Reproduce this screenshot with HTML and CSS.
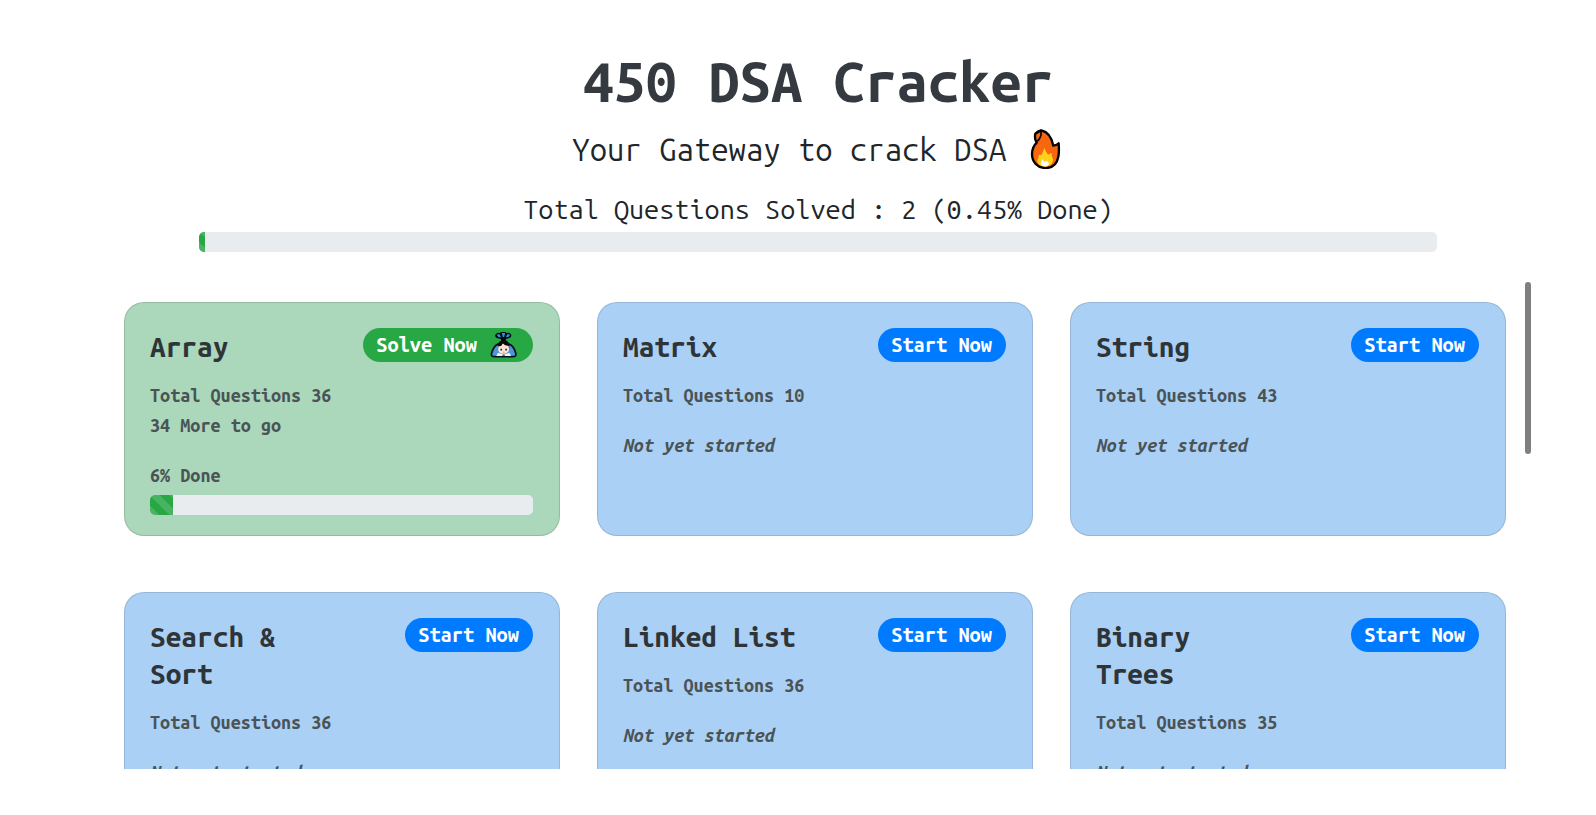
FILE: index.html
```html
<!DOCTYPE html>
<html lang="en">
<head>
<meta charset="utf-8">
<title>450 DSA Cracker</title>
<link rel="stylesheet" href="styles.css">
</head>
<body>
<main class="app">
  <header class="header">
    <h1 class="title">450 DSA Cracker</h1>
    <p class="tagline">Your Gateway to crack DSA <svg class="flame" viewBox="15 26 120 120" role="img" aria-label="fire"><path d="M67 30C85 34 98 50 103 76Q112 75 119 69C120 84 121 96 118 109C114 132 100 143 80 143C55 143 39 124 39 101C39 87 44 76 53 67C48 60 47 50 49 40L66 30Z" fill="#f96610" stroke="#000" stroke-width="7" stroke-linejoin="round"/><path d="M66 33Q68 45 63 52Q60 58 55 63" fill="none" stroke="#000" stroke-width="5"/><path d="M65 31Q54 32 50 40" fill="none" stroke="#000" stroke-width="6"/><path d="M76 82C79 92 83 97 87 103L98 98Q96 108 102 117C103 129 93 139 79 139C62 139 55 130 55 120Q59 113 60 103L67 104C70 97 74 91 76 82Z" fill="#ffd21a"/><path d="M70 117L76 125L84 121Q86 126 90 128C91 134 84 139 77 138Q66 138 65 129Q69 124 70 117Z" fill="#fff"/></svg></p>
    <p class="solved" id="solved">Total Questions Solved : 2 (0.45% Done)</p>
    <div class="progress" role="progressbar" aria-labelledby="solved" aria-valuenow="0.45"><div class="progress-bar" style="width:0.45%"></div></div>
  </header>
  <section class="topics">
    <div class="scroller">
      <article class="card card-active">
        <div class="card-head"><h2 class="card-title">Array</h2><button class="badge badge-solve">Solve Now <svg class="bow" viewBox="33 20 78 78" aria-hidden="true"><path d="M55 41Q45 37 49 30Q54 23 61 26Q65 22 71 23Q78 22 81 26Q90 23 94 30Q97 38 87 41L79 43V50H65V43Z" fill="#05090d"/><path d="M52 31L60 29L65 38L57 37ZM67 26H77L74 37H70ZM83 29L92 31L86 37L79 38Z" fill="#318fe0"/><path d="M56 58C46 62 41 73 38 83Q35 94 44 94H101Q110 94 107 83C104 72 99 62 88 58Z" fill="#4c96dc" stroke="#07111b" stroke-width="5"/><path d="M57 70C53 57 60 46 72 46C86 46 91 58 88 70Z" fill="#0a0a0a"/><path d="M57 64Q66 66 70 56Q75 63 87 63L88 75Q84 86 72 86Q59 86 57 75Z" fill="#ffe5da"/><path d="M63 71H68V76H63ZM77 71H82V76H77Z" fill="#252525"/><path d="M70 80H75V82H70Z" fill="#ca7061"/><path d="M56 83L71 88L67 92H51ZM89 83L74 88L77 92H94Z" fill="#fff1ea"/></svg></button></div>
        <div class="card-text"><p>Total Questions 36</p><p>34 More to go</p></div>
        <p class="card-text" id="array-done">6% Done</p>
        <div class="progress" role="progressbar" aria-labelledby="array-done" aria-valuenow="6"><div class="progress-bar" style="width:6%"></div></div>
      </article>
      <article class="card">
        <div class="card-head"><h2 class="card-title">Matrix</h2><button class="badge">Start Now</button></div>
        <p class="card-text">Total Questions 10</p>
        <p class="card-text"><em>Not yet started</em></p>
      </article>
      <article class="card">
        <div class="card-head"><h2 class="card-title">String</h2><button class="badge">Start Now</button></div>
        <p class="card-text">Total Questions 43</p>
        <p class="card-text"><em>Not yet started</em></p>
      </article>
      <article class="card">
        <div class="card-head"><h2 class="card-title">Search &amp; Sort</h2><button class="badge">Start Now</button></div>
        <p class="card-text">Total Questions 36</p>
        <p class="card-text"><em>Not yet started</em></p>
      </article>
      <article class="card">
        <div class="card-head"><h2 class="card-title">Linked List</h2><button class="badge">Start Now</button></div>
        <p class="card-text">Total Questions 36</p>
        <p class="card-text"><em>Not yet started</em></p>
      </article>
      <article class="card">
        <div class="card-head"><h2 class="card-title">Binary Trees</h2><button class="badge">Start Now</button></div>
        <p class="card-text">Total Questions 35</p>
        <p class="card-text"><em>Not yet started</em></p>
      </article>
    </div>
    <div class="track"><div class="thumb"></div></div>
  </section>
</main>
</body>
</html>
```
FILE: styles.css
```css
* {
  box-sizing: border-box;
}

body {
  margin: 0;
  background: #fff;
  color: #212529;
  font-family: "Ubuntu Mono", "DejaVu Sans Mono", monospace;
}

h1, h2, p {
  margin: 0;
}

.app {
  display: flex;
  flex-direction: column;
  gap: 30px;
  height: 100vh;
  padding: 50px 65px 46px 105px;
}

.header {
  display: flex;
  flex-direction: column;
  padding: 0 94px;
  text-align: center;
}

.title {
  margin-bottom: 15px;
  color: #343a40;
  font-size: 56px;
  font-weight: 600;
  line-height: 64px;
}

.tagline {
  margin-bottom: 20px;
  font-size: 31px;
  line-height: 42px;
}

.flame {
  width: 40px;
  height: 40px;
  vertical-align: -8px;
}

.solved {
  margin-bottom: 5px;
  font-size: 27px;
  line-height: 36px;
}

.progress {
  height: 20px;
  overflow: hidden;
  border-radius: 5px;
  background: #e9ecef;
}

.progress-bar {
  height: 100%;
  background: #28a745 linear-gradient(45deg, rgba(255, 255, 255, .15) 25%, transparent 25%, transparent 50%, rgba(255, 255, 255, .15) 50%, rgba(255, 255, 255, .15) 75%, transparent 75%) 0 0 / 20px 20px;
}

.topics {
  display: flex;
  flex: 1;
  min-height: 0;
}

.scroller {
  display: grid;
  flex: 1;
  grid-template-columns: repeat(3, 1fr);
  grid-auto-rows: minmax(234px, max-content);
  gap: 56px 37px;
  padding: 20px 19px;
  overflow-y: auto;
  scrollbar-width: none;
}

.track {
  width: 6px;
}

.thumb {
  height: 172px;
  border-radius: 3px;
  background: #7f7f7f;
}

.card {
  padding: 25px 26px 20px 25px;
  border: 1px solid rgba(0, 0, 0, .125);
  border-radius: 20px;
  background: #abd0f5;
}

.card-active {
  background: #abd7ba;
}

.card-head {
  display: flex;
  align-items: flex-start;
  justify-content: space-between;
  margin-bottom: 15px;
}

.card-title {
  max-width: 48%;
  color: #2e3437;
  font-size: 28px;
  font-weight: 600;
  line-height: 37px;
}

.card-text {
  color: #4a5356;
  font-size: 18px;
  font-weight: 600;
  line-height: 30px;
}

.card-text + .card-text {
  margin-top: 20px;
}

.card .progress {
  margin-top: 5px;
}

.badge {
  display: flex;
  align-items: center;
  gap: 13px;
  height: 34px;
  padding: 0 14px 1px 13px;
  border: 0;
  border-radius: 17px;
  background: #007bff;
  color: #fff;
  font-family: inherit;
  font-size: 20px;
  font-weight: 600;
  white-space: nowrap;
}

.badge-solve {
  padding-right: 16px;
  background: #28a745;
}

.bow {
  width: 27px;
  height: 27px;
}
```
